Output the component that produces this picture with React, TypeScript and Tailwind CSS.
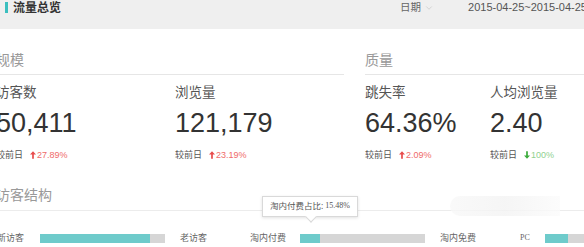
import { ChevronDown } from "lucide-react";

const font = { fontFamily: '"Noto Sans", "Noto Sans CJK SC", sans-serif' };
const latin = { fontFamily: '"Liberation Sans", "Noto Sans CJK SC", sans-serif' };

type Metric = {
  label: string;
  value: string;
  change: string;
  up: boolean;
};

const scale: Metric[] = [
  { label: "访客数", value: "50,411", change: "27.89%", up: true },
  { label: "浏览量", value: "121,179", change: "23.19%", up: true },
];

const quality: Metric[] = [
  { label: "跳失率", value: "64.36%", change: "2.09%", up: true },
  { label: "人均浏览量", value: "2.40", change: "100%", up: false },
];

const MetricCell = ({ m, width }: { m: Metric; width: string }) => (
  <div className={`${width} shrink-0`}>
    <div className="text-[13.5px] leading-[18px] text-[#555] mt-[8px]">{m.label}</div>
    <div className="text-[27px] leading-[32px] text-[#333] mt-[6px]" style={latin}>
      {m.value}
    </div>
    <div className="flex items-center mt-[9px] text-[9px] leading-[14px]">
      <span className="text-[#555]">较前日</span>
      {m.up ? (
        <span className="ml-[7px] flex items-center text-[#ef6a6a]" style={latin}>
          <svg width="6" height="8" viewBox="0 0 7 9" className="mr-[1px]">
            <path d="M3.5 0 L7 4 H4.5 V9 H2.5 V4 H0 Z" fill="#e84c4c" />
          </svg>
          {m.change}
        </span>
      ) : (
        <span className="ml-[7px] flex items-center text-[#8fd18f]" style={latin}>
          <svg width="6" height="8" viewBox="0 0 7 9" className="mr-[1px]">
            <path d="M3.5 9 L7 5 H4.5 V0 H2.5 V5 H0 Z" fill="#3bab3b" />
          </svg>
          {m.change}
        </span>
      )}
    </div>
  </div>
);

const Bar = ({ width, fill }: { width: string; fill: string }) => (
  <div className={`${width} h-[9px] bg-[#d6d6d6] flex`}>
    <div className={`${fill} h-full bg-[#6ecbcb]`} />
  </div>
);

export default function App() {
  return (
    <div className="w-[584px] h-[247px] overflow-hidden bg-white relative" style={font}>
      {/* header */}
      <div className="h-[29px] bg-[#efefef] flex items-start">
        <div className="w-[3px] h-[11px] bg-[#3bbfbf] ml-[5px] mt-[2px]" />
        <div className="ml-[5px] text-[12px] leading-[15px] font-bold text-[#333]">流量总览</div>
        <div className="ml-auto flex items-center text-[10.5px] leading-[15px] text-[#666]">
          日期
          <ChevronDown size={10} strokeWidth={1} className="ml-[3px] text-[#aaa]" />
        </div>
        <div className="ml-[34px] mr-[-3px] text-[11px] leading-[15px] text-[#555] whitespace-nowrap" style={latin}>
          2015-04-25~2015-04-25
        </div>
      </div>

      {/* metrics */}
      <div className="flex ml-[-4px] mt-[22px]">
        <div className="w-[348px] shrink-0">
          <div className="text-[14px] leading-[18px] text-[#999] pb-[5px] border-b border-[#e6e6e6]">规模</div>
          <div className="flex">
            {scale.map((m) => (
              <MetricCell key={m.label} m={m} width="w-[179px]" />
            ))}
          </div>
        </div>
        <div className="ml-[21px] flex-1">
          <div className="text-[14px] leading-[18px] text-[#999] pb-[5px] border-b border-[#e6e6e6]">质量</div>
          <div className="flex">
            {quality.map((m) => (
              <MetricCell key={m.label} m={m} width="w-[125px]" />
            ))}
          </div>
        </div>
      </div>

      {/* visitor structure */}
      <div className="ml-[-4px] mt-[24px]">
        <div className="text-[14px] leading-[18px] text-[#999] pb-[6px] border-b border-[#ececec] w-[700px]">访客结构</div>
        <div className="flex items-center mt-[20px] text-[9px] leading-[14px] text-[#666] whitespace-nowrap">
          <span className="ml-[1px]">新访客</span>
          <div className="ml-[16px]">
            <Bar width="w-[125px]" fill="w-[110px]" />
          </div>
          <span className="ml-[15px]">老访客</span>
          <span className="ml-[43px]">淘内付费</span>
          <div className="ml-[14px] relative">
            <Bar width="w-[125px]" fill="w-[20px]" />
            {/* tooltip */}
            <div className="absolute left-[-38px] bottom-[26px] w-[96px] h-[21px] bg-white border border-[#d9d9d9] shadow-[0_1px_3px_rgba(0,0,0,0.12)] flex items-center justify-center text-[8.5px] text-[#555]">
              淘内付费占比:
              <span className="ml-[2px] text-[8px]" style={{ fontFamily: '"Liberation Serif", serif' }}>
                15.48%
              </span>
              <div className="absolute left-[44px] bottom-[-5px] w-[8px] h-[8px] bg-white border-r border-b border-[#d9d9d9] rotate-45" />
            </div>
          </div>
          <span className="ml-[15px]">淘内免费</span>
          <span className="ml-[44px] text-[8px]" style={{ fontFamily: '"Liberation Serif", serif' }}>
            PC
          </span>
          <div className="ml-[15px]">
            <Bar width="w-[60px]" fill="w-[23px]" />
          </div>
        </div>
      </div>

      {/* faint smear at right */}
      <div className="absolute left-[450px] top-[196px] w-[110px] h-[20px] bg-gradient-to-r from-[#f8f8f8] via-[#f3f3f3] to-[#fbfbfb] rounded-l-[30px] opacity-80" />
    </div>
  );
}
